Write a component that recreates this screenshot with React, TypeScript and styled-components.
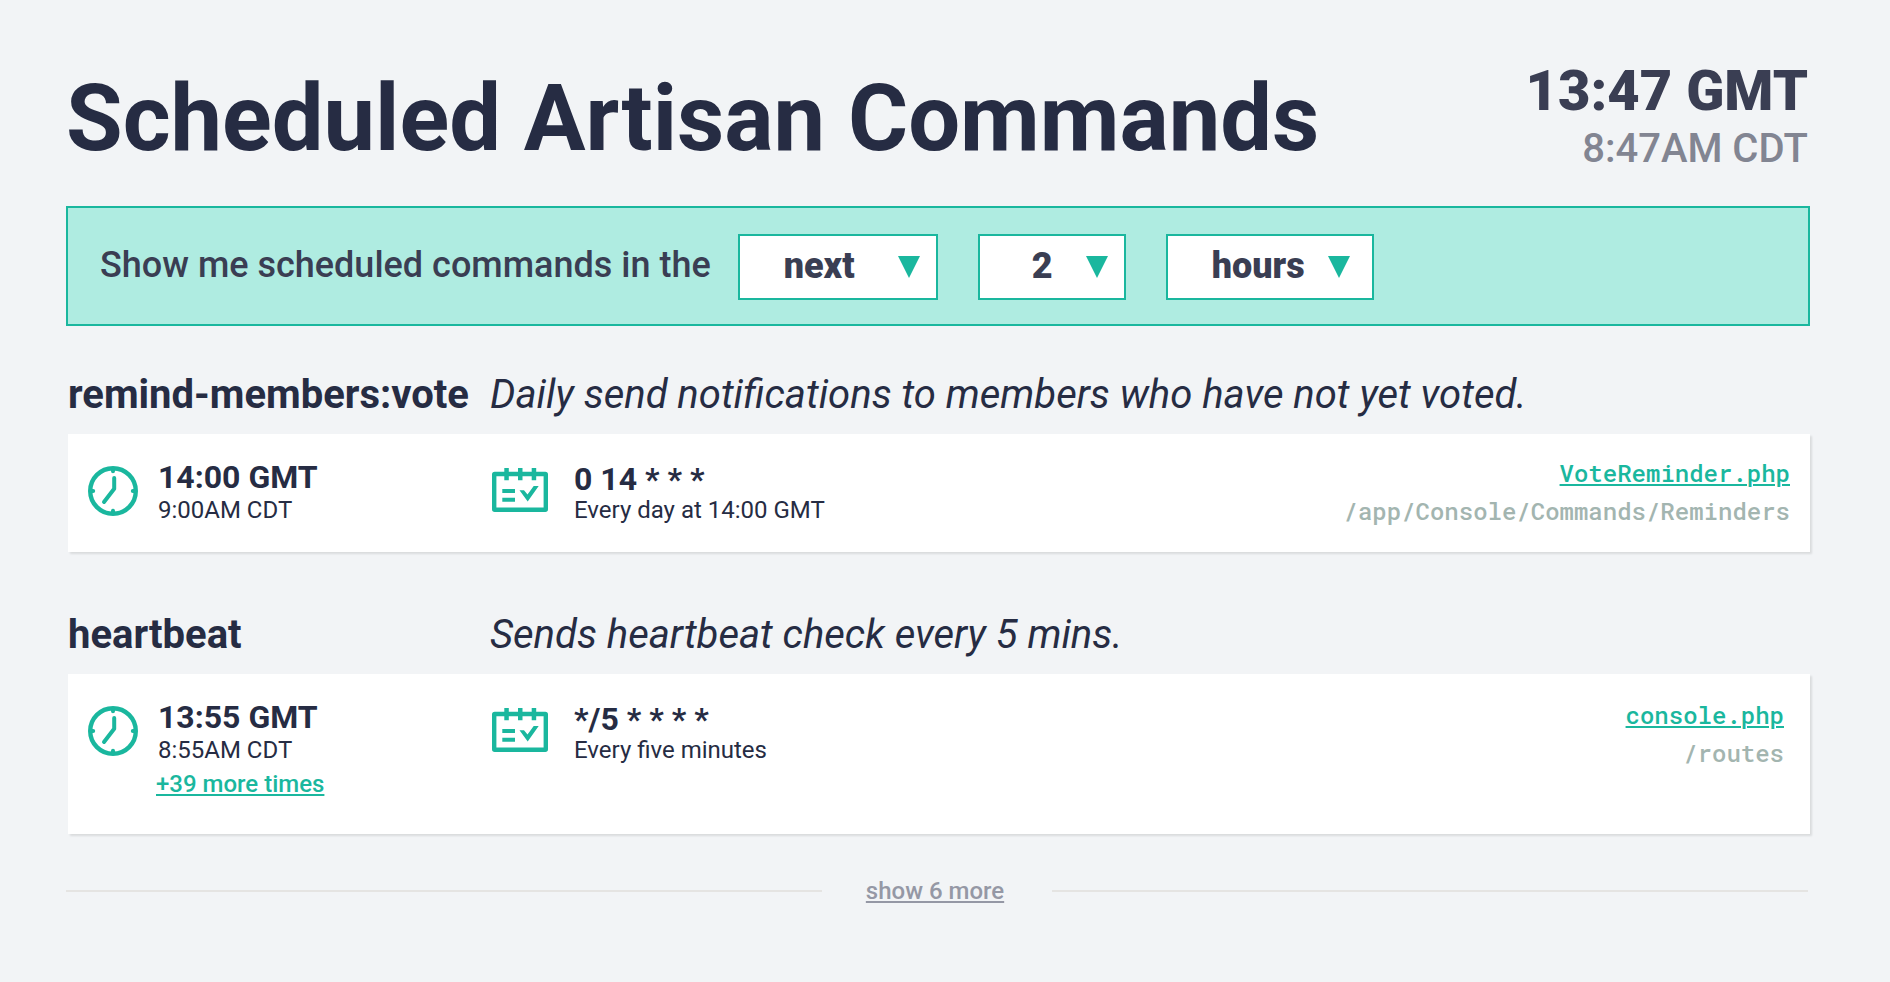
import React from "react";
import styled, { createGlobalStyle, css } from "styled-components";

const color = {
  page: "#f2f4f6",
  ink: "#262c43",
  slate: "#3a3e53",
  muted: "#828592",
  faint: "#9598a5",
  path: "#a3b5b0",
  accent: "#1ab79e",
  mint: "#afece1",
  rule: "#e5e4e2",
};

const GlobalStyle = createGlobalStyle`
  *, *::before, *::after { box-sizing: border-box; }
  body {
    margin: 0;
    background: ${color.page};
    color: ${color.ink};
    font-family: Roboto, "Liberation Sans", sans-serif;
  }
  h1, h2, p { margin: 0; }
`;

const Page = styled.main`
  min-height: 100vh;
  padding: 61px 80px 60px 66px;
`;

const Header = styled.header`
  display: flex;
  align-items: center;
  justify-content: space-between;
  padding-right: 2px;
  margin-bottom: 29px;
`;

const Title = styled.h1`
  font-size: 92px;
  line-height: 96px;
  font-weight: 700;
`;

const Clock = styled.div`
  text-align: right;
  white-space: nowrap;
`;

const ClockMain = styled.p`
  font-size: 56px;
  line-height: 60px;
  font-weight: 900;
  color: ${color.slate};
`;

const ClockLocal = styled.p`
  font-size: 40px;
  line-height: 56px;
  font-weight: 500;
  color: ${color.muted};
`;

const FilterBar = styled.form`
  display: flex;
  align-items: center;
  min-height: 120px;
  padding: 2px 32px 0;
  background: ${color.mint};
  border: 2px solid ${color.accent};
`;

const FilterLabel = styled.label`
  padding-bottom: 4px;
  margin-right: 27px;
  font-size: 36px;
  line-height: 44px;
  font-weight: 500;
  color: ${color.slate};
`;

const SelectBox = styled.div<{ $width: number }>`
  position: relative;
  width: ${({ $width }) => $width}px;
  height: 66px;

  & + & { margin-left: 40px; }
`;

const Select = styled.select<{ $indent: number }>`
  appearance: none;
  width: 100%;
  height: 100%;
  padding: 0 40px 2px ${({ $indent }) => $indent}px;
  border: 2px solid ${color.accent};
  border-radius: 0;
  background: #fff;
  color: ${color.slate};
  font-family: inherit;
  font-size: 36px;
  font-weight: 900;
`;

const Arrow = styled.svg<{ $right: number }>`
  position: absolute;
  top: 22px;
  right: ${({ $right }) => $right}px;
  pointer-events: none;
  fill: ${color.accent};
`;

const Command = styled.section<{ $first?: boolean }>`
  margin-top: ${({ $first }) => ($first ? 45 : 59)}px;
  padding-left: 2px;
`;

const columns = css`
  display: grid;
  grid-template-columns: 422px 1fr auto;
`;

const CommandHead = styled.header`
  ${columns}
  margin-bottom: 15px;
  font-size: 40px;
  line-height: 48px;
`;

const CommandName = styled.h2`
  font-size: 40px;
  font-weight: 700;
`;

const CommandText = styled.p`
  font-style: italic;
`;

const Card = styled.div<{ $tall: boolean }>`
  ${columns}
  align-items: start;
  padding: 20px 20px ${({ $tall }) => ($tall ? 35 : 22)}px 0;
  background: #fff;
  box-shadow: 2px 2px 2px rgba(0, 0, 0, 0.1);
`;

const Cell = styled.div<{ $indent: number; $top: number; $gap: number }>`
  display: flex;
  align-items: flex-start;
  gap: ${({ $gap }) => $gap}px;
  padding: ${({ $top }) => $top}px 0 0 ${({ $indent }) => $indent}px;

  svg { flex: none; margin-top: 7px; }
`;

const Main = styled.p`
  font-size: 32px;
  line-height: 36px;
  font-weight: 700;
`;

const Sub = styled.p<{ $line: number }>`
  font-size: 24px;
  line-height: ${({ $line }) => $line}px;
`;

const link = css`
  font-size: 24px;
  font-weight: 500;
  text-decoration: underline;
  text-decoration-thickness: 2px;
  text-underline-offset: 2px;
`;

const MoreTimes = styled.a`
  ${link}
  display: block;
  margin: 4px 0 0 -2px;
  line-height: 30px;
  color: ${color.accent};
`;

const Source = styled.div<{ $tall: boolean }>`
  display: flex;
  flex-direction: column;
  align-items: flex-end;
  padding: ${({ $tall }) => ($tall ? "2px 6px 0 0" : "0")};
  font-family: "Roboto Mono", "DejaVu Sans Mono", monospace;
  font-size: 24px;
  line-height: 38px;
  font-weight: 500;
`;

const SourceFile = styled.a`
  ${link}
  color: ${color.accent};
`;

const SourcePath = styled.span`
  color: ${color.path};
`;

const Footer = styled.footer`
  display: flex;
  align-items: center;
  margin-top: 41px;
  padding-right: 2px;

  &::before, &::after {
    content: "";
    flex: 1;
    height: 2px;
    background: ${color.rule};
  }
`;

const ShowMore = styled.button`
  ${link}
  margin: 0 48px 0 44px;
  padding: 0;
  border: 0;
  background: none;
  font-family: inherit;
  line-height: 32px;
  color: ${color.faint};
  cursor: pointer;
`;

const ClockIcon = () => (
  <svg width="50" height="50" viewBox="0 0 50 50" fill="none" stroke={color.accent} strokeWidth="4" strokeLinecap="round" strokeLinejoin="round" aria-hidden="true">
    <circle cx="25" cy="25" r="22.8" strokeWidth="4.4" />
    <path d="M25 3v2.2M25 47v-2.2M3 25h2.2M47 25h-2.2" />
    <path d="M26.2 12v10.8L16 36" />
  </svg>
);

const CalendarIcon = () => (
  <svg width="56" height="44" viewBox="0 0 56 44" fill={color.accent} aria-hidden="true">
    <rect x="2.2" y="6" width="51.6" height="35.8" rx="0.5" fill="none" stroke={color.accent} strokeWidth="4.4" />
    <path d="M12.3 0h4.5v12.3h-4.5zM26 0h4.5v12.3H26zM39.7 0h4.5v12.3h-4.5z" />
    <path d="M10.3 21H23v4H10.3zM10.3 29.7H23v4H10.3z" />
    <path d="M27.5 22.3H32l3.5 4.2L41.7 18h5L35.7 33.5z" />
  </svg>
);

interface FilterProps {
  label: string;
  value: string;
  options: string[];
  width: number;
  indent: number;
  arrowRight: number;
  id?: string;
}

const Filter = ({ label, value, options, width, indent, arrowRight, id }: FilterProps) => (
  <SelectBox $width={width}>
    <Select id={id} aria-label={id ? undefined : label} defaultValue={value} $indent={indent}>
      {options.map((o) => (
        <option key={o}>{o}</option>
      ))}
    </Select>
    <Arrow $right={arrowRight} width="22" height="22" viewBox="0 0 22 22" aria-hidden="true">
      <path d="M0 0h22L11 22z" />
    </Arrow>
  </SelectBox>
);

interface CommandData {
  name: string;
  text: string;
  time: string;
  local: string;
  more?: string;
  cron: string;
  meaning: string;
  file: string;
  path: string;
}

const commands: CommandData[] = [
  {
    name: "remind-members:vote",
    text: "Daily send notifications to members who have not yet voted.",
    time: "14:00 GMT",
    local: "9:00AM CDT",
    cron: "0 14 * * *",
    meaning: "Every day at 14:00 GMT",
    file: "VoteReminder.php",
    path: "/app/Console/Commands/Reminders",
  },
  {
    name: "heartbeat",
    text: "Sends heartbeat check every 5 mins.",
    time: "13:55 GMT",
    local: "8:55AM CDT",
    more: "+39 more times",
    cron: "*/5 * * * *",
    meaning: "Every five minutes",
    file: "console.php",
    path: "/routes",
  },
];

export default function App() {
  return (
    <>
      <GlobalStyle />
      <Page>
        <Header>
          <Title>Scheduled Artisan Commands</Title>
          <Clock>
            <ClockMain>13:47 GMT</ClockMain>
            <ClockLocal>8:47AM CDT</ClockLocal>
          </Clock>
        </Header>

        <FilterBar>
          <FilterLabel htmlFor="direction">Show me scheduled commands in the</FilterLabel>
          <Filter id="direction" label="Direction" value="next" options={["next", "last"]} width={200} indent={44} arrowRight={18} />
          <Filter label="Amount" value="2" options={["1", "2", "3", "4"]} width={148} indent={52} arrowRight={18} />
          <Filter label="Unit" value="hours" options={["hours", "days"]} width={208} indent={44} arrowRight={24} />
        </FilterBar>

        {commands.map((c, i) => (
          <Command key={c.name} $first={i === 0}>
            <CommandHead>
              <CommandName>{c.name}</CommandName>
              <CommandText>{c.text}</CommandText>
            </CommandHead>
            <Card $tall={Boolean(c.more)}>
              <Cell $indent={20} $top={5} $gap={20}>
                <ClockIcon />
                <div>
                  <Main>{c.time}</Main>
                  <Sub $line={30}>{c.local}</Sub>
                  {c.more && <MoreTimes href="#times">{c.more}</MoreTimes>}
                </div>
              </Cell>
              <Cell $indent={2} $top={7} $gap={26}>
                <CalendarIcon />
                <div>
                  <Main>{c.cron}</Main>
                  <Sub $line={26}>{c.meaning}</Sub>
                </div>
              </Cell>
              <Source $tall={Boolean(c.more)}>
                <SourceFile href="#source">{c.file}</SourceFile>
                <SourcePath>{c.path}</SourcePath>
              </Source>
            </Card>
          </Command>
        ))}

        <Footer>
          <ShowMore type="button">show 6 more</ShowMore>
        </Footer>
      </Page>
    </>
  );
}
